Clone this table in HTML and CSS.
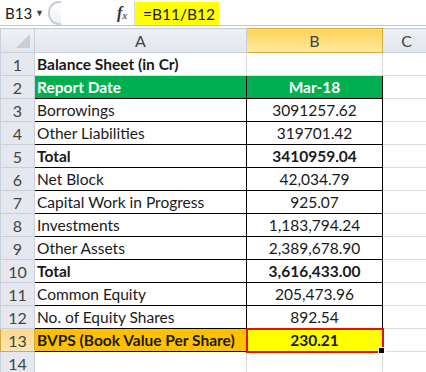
FILE: index.html
```html
<!DOCTYPE html>
<html>
<head>
<meta charset="utf-8">
<link rel="stylesheet" href="styles.css">
</head>
<body>
<div class="fbar">
  <div class="namebox"><span class="ref">B13</span><span class="drop">&#9660;</span></div>
  <div class="handle"><span class="knob"></span></div>
  <div class="fx"><i>f</i><span class="x">x</span></div>
  <div class="formula"><span class="ftext">=B11/B12</span></div>
</div>
<table class="sheet">
  <colgroup><col class="c0"><col class="ca"><col class="cb"><col class="cc"></colgroup>
  <tr class="hdr"><th class="corner"><span class="tri"></span></th><th>A</th><th class="sel">B</th><th>C</th></tr>
  <tr><th>1</th><td class="b">Balance Sheet (in Cr)</td><td></td><td></td></tr>
  <tr class="t"><th>2</th><td class="green">Report Date</td><td class="green n">Mar-18</td><td class="ln"></td></tr>
  <tr class="t"><th>3</th><td>Borrowings</td><td class="n">3091257.62</td><td class="ln"></td></tr>
  <tr class="t"><th>4</th><td>Other Liabilities</td><td class="n">319701.42</td><td class="ln"></td></tr>
  <tr class="t"><th>5</th><td class="b">Total</td><td class="n b">3410959.04</td><td class="ln"></td></tr>
  <tr class="t"><th>6</th><td>Net Block</td><td class="n">42,034.79</td><td class="ln"></td></tr>
  <tr class="t"><th>7</th><td>Capital Work in Progress</td><td class="n">925.07</td><td class="ln"></td></tr>
  <tr class="t"><th>8</th><td>Investments</td><td class="n">1,183,794.24</td><td class="ln"></td></tr>
  <tr class="t"><th>9</th><td>Other Assets</td><td class="n">2,389,678.90</td><td class="ln"></td></tr>
  <tr class="t"><th>10</th><td class="b">Total</td><td class="n b">3,616,433.00</td><td class="ln"></td></tr>
  <tr class="t"><th>11</th><td>Common Equity</td><td class="n">205,473.96</td><td class="ln"></td></tr>
  <tr class="t"><th>12</th><td>No. of Equity Shares</td><td class="n">892.54</td><td class="ln"></td></tr>
  <tr class="t"><th class="selrow">13</th><td class="b orange">BVPS (Book Value Per Share)</td><td class="n b active">230.21<span class="fill"></span></td><td class="ln"></td></tr>
  <tr><th>14</th><td class="tt"></td><td class="tt"></td><td></td></tr>
</table>
</body>
</html>
```
FILE: styles.css
```css
html, body { margin: 0; padding: 0; background: #fff; }
body { width: 426px; height: 372px; overflow: hidden; font-family: "Lato", "Liberation Sans", sans-serif; color: #1a1a1a; }

.fbar { display: flex; height: 26px; border-bottom: 1px solid #b9c4d2; background: #fff; box-sizing: border-box; }
.namebox { width: 47px; display: flex; align-items: center; justify-content: space-between; padding: 0 3px 0 5px; box-sizing: border-box; font-size: 15px; }
.drop { font-size: 9px; color: #444; }
.handle { width: 62px; display: flex; align-items: center; padding-left: 1px; background: #fff; }
.knob { width: 11px; height: 20px; border: 2px solid #c8cdd4; border-right: none; border-radius: 11px 0 0 11px; background: linear-gradient(#fff, #eef0f3); }
.fx { width: 24px; display: flex; align-items: center; justify-content: center; font-family: "Liberation Serif", serif; font-size: 16px; background: #fff; color: #333; }
.fx i { font-weight: bold; }
.fx .x { font-size: 11px; font-style: italic; margin-top: 4px; }
.formula { flex: 1; display: flex; align-items: stretch; padding-top: 2px; border-left: 1px solid #d8dde4; }
.ftext { background: #ffff00; width: 84px; display: flex; align-items: center; padding-left: 8px; box-sizing: border-box; font-size: 15.5px; }

.sheet { border-collapse: collapse; table-layout: fixed; margin-top: 2px; width: 430px; font-size: 15.5px; }
.c0 { width: 34px; } .ca { width: 212px; } .cb { width: 136px; } .cc { width: 48px; }
.sheet tr { height: 23px; }
.sheet th, .sheet td { padding: 0; height: 23px; box-sizing: border-box; }
.sheet th { background: #e5e9ef; font-weight: normal; color: #444; border: 1px solid #c9d0da; font-size: 16px; }
.sheet td { border: 1px solid #dcdcdc; padding-left: 2px; white-space: nowrap; overflow: hidden; }
.hdr th { height: 24px; background: linear-gradient(#eef1f5, #e2e6ec); }
.hdr th.sel { background: linear-gradient(#fcd45a, #ffe9a2); border: 1px solid #d4aa3c; }
.corner { position: relative; }
.tri { position: absolute; right: 4px; bottom: 4px; width: 0; height: 0; border-left: 14px solid transparent; border-bottom: 14px solid #c9ced6; }
.sheet th.selrow { background: linear-gradient(#fbd98e, #fde6b1); border-color: #d4aa3c; }
.t td:nth-child(2), .t td:nth-child(3) { border: 1px solid #000; }
.sheet td.tt { border-top: 1px solid #000; }
.b { font-weight: bold; }
.n { text-align: center; padding-left: 0; }
.sheet td.n { padding-left: 0; }
.green { background: #00b050; color: #fff; font-weight: bold; }
.orange { background: #ffc000; }
.sheet td.active { background: #ffff00; border: 2px solid #e01010; position: relative; overflow: visible; }
.fill { position: absolute; right: -3px; bottom: -3px; width: 5px; height: 5px; background: #000; border: 1px solid #fff; }
```
